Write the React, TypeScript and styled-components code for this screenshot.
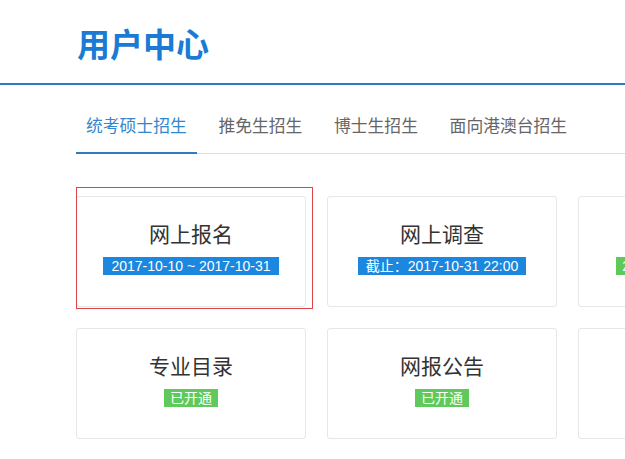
import React from "react";
import styled, { createGlobalStyle } from "styled-components";

const GlobalStyle = createGlobalStyle`
  html, body {
    margin: 0;
    padding: 0;
    background: #fff;
    overflow: hidden;
  }
  body {
    font-family: "Liberation Sans", "Noto Sans CJK SC", sans-serif;
    color: #333;
  }
`;

const Page = styled.div`
  width: 100%;
  overflow: hidden;
`;

const Header = styled.header`
  height: 85px;
  border-bottom: 2px solid #2b7bc2;
  display: flex;
  align-items: center;
  padding-left: 77px;
  box-sizing: border-box;
`;

const Title = styled.h1`
  margin: 0;
  margin-top: 2px;
  font-size: 33px;
  line-height: 40px;
  font-weight: 700;
  color: #1a7ad4;
  font-family: "Noto Sans CJK SC", sans-serif;
  letter-spacing: 0;
`;

const Main = styled.main`
  padding-left: 76px;
  width: 1100px;
  box-sizing: border-box;
`;

const TabBar = styled.nav`
  margin-top: 28px;
  display: flex;
  gap: 11.7px;
  border-bottom: 1px solid #dcdcdc;
`;

const Tab = styled.div<{ $active?: boolean }>`
  padding: 0 10px 15px;
  font-size: 16.8px;
  line-height: 24px;
  font-family: "Noto Sans CJK SC", sans-serif;
  color: ${(p) => (p.$active ? "#3487cc" : "#666")};
  border-bottom: 2px solid ${(p) => (p.$active ? "#2e7bbf" : "transparent")};
  margin-bottom: -1px;
  cursor: pointer;
`;

const Grid = styled.section`
  margin-top: 42px;
  display: grid;
  grid-template-columns: repeat(4, 230px);
  grid-auto-rows: 111px;
  column-gap: 21px;
  row-gap: 21px;
`;

const Card = styled.div<{ $highlight?: boolean }>`
  position: relative;
  border: 1px solid #e6e6e6;
  border-radius: 3px;
  box-sizing: border-box;
  display: flex;
  flex-direction: column;
  align-items: center;
  padding-top: 22px;
  background: #fff;

  ${(p) =>
    p.$highlight &&
    `
    &::after {
      content: "";
      position: absolute;
      top: -10px;
      left: -1px;
      right: -8px;
      bottom: -3px;
      border: 1px solid #d9464a;
      pointer-events: none;
    }
  `}
`;

const CardTitle = styled.div`
  font-size: 21px;
  line-height: 28px;
  font-family: "Noto Sans CJK SC", sans-serif;
  color: #333;
  margin-bottom: 10px;
`;

const Badge = styled.span<{ $tone: "blue" | "green" }>`
  display: inline-block;
  padding: 0 ${(p) => (p.$tone === "blue" ? 8 : 6)}px;
  height: 18px;
  line-height: 18px;
  font-size: 14px;
  color: #fff;
  white-space: nowrap;
  background: ${(p) => (p.$tone === "blue" ? "#1b87de" : "#5fc95b")};
`;

const tabs = ["统考硕士招生", "推免生招生", "博士生招生", "面向港澳台招生"];

const cards: { title: string; badge: string; tone: "blue" | "green"; highlight?: boolean }[] = [
  { title: "网上报名", badge: "2017-10-10 ~ 2017-10-31", tone: "blue", highlight: true },
  { title: "网上调查", badge: "截止：2017-10-31 22:00", tone: "blue" },
  { title: "网上确认", badge: "2017-11-01 09:00 开始", tone: "green" },
  { title: "准考证", badge: "未开通", tone: "blue" },
  { title: "专业目录", badge: "已开通", tone: "green" },
  { title: "网报公告", badge: "已开通", tone: "green" },
  { title: "成绩查询", badge: "已开通", tone: "green" },
  { title: "调剂系统", badge: "已开通", tone: "green" },
];

export default function App() {
  return (
    <Page>
      <GlobalStyle />
      <Header>
        <Title>用户中心</Title>
      </Header>
      <Main>
        <TabBar>
          {tabs.map((t, i) => (
            <Tab key={t} $active={i === 0}>
              {t}
            </Tab>
          ))}
        </TabBar>
        <Grid>
          {cards.map((c) => (
            <Card key={c.title} $highlight={c.highlight}>
              <CardTitle>{c.title}</CardTitle>
              <Badge $tone={c.tone}>{c.badge}</Badge>
            </Card>
          ))}
        </Grid>
      </Main>
    </Page>
  );
}
